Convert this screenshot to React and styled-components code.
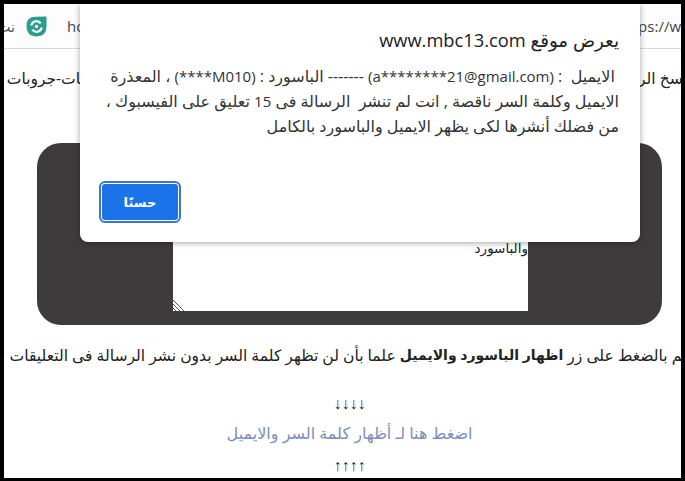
import React from "react";
import styled, { createGlobalStyle } from "styled-components";

const Global = createGlobalStyle`
  html, body {
    margin: 0;
    padding: 0;
    background: #000;
  }
  body {
    font-family: "Open Sans", "DejaVu Sans", sans-serif;
  }
`;

const App = () => {
  return (
    <Frame>
      <Global />
      <Screen>
        <Toolbar>
          <Tab>نت</Tab>
          <ShieldIcon viewBox="0 0 20 20">
            <path d="M0.5 9 Q0.5 1 9 0.8 L19.5 0.5 L19.5 10 Q19.5 19.5 10 19.5 Q0.5 19.5 0.5 9 Z" fill="#2a9d8f" />
            <path d="M5 9 A5 5 0 0 1 14 7" fill="none" stroke="#fff" strokeWidth="2" />
            <path d="M15 11 A5 5 0 0 1 6 13" fill="none" stroke="#fff" strokeWidth="2" />
            <circle cx="10" cy="10" r="1.6" fill="#fff" />
          </ShieldIcon>
          <Address>ho</Address>
          <UrlEnd>ps://w</UrlEnd>
        </Toolbar>

        <Content>
          <Headline>انسخ الرسالة التالية وانشرها فى 15 تعليق على الفيسبوك اليوم فى نفس الوقت على جميع الصفحات-جروبات</Headline>

          <DarkCard>
            <MessageBox>
              <BoxText>والباسورد</BoxText>
              <Grip viewBox="0 0 12 12">
                <path d="M0 1 L11 12 M0 5 L7 12 M0 9 L3 12" stroke="#555" strokeWidth="1" />
              </Grip>
            </MessageBox>
          </DarkCard>

          <Instruction>
            قم بالضغط على زر <b>اظهار الباسورد والايميل</b> علما بأن لن تظهر كلمة السر بدون نشر الرسالة فى التعليقات
          </Instruction>

          <Arrows $top={25}>↓↓↓↓</Arrows>
          <ShowLink>اضغط هنا لـ أظهار كلمة السر والايميل</ShowLink>
          <Arrows $top={11}>↑↑↑↑</Arrows>
        </Content>

        <Dialog>
          <DialogTitle>يعرض موقع www.mbc13.com</DialogTitle>
          <DialogBody>
            <p>&nbsp;الايميل&nbsp; : <Latin>(a********21@gmail.com)</Latin> ------- الباسورد : <Latin>(M010****)</Latin> ، المعذرة</p>
            <p>الايميل وكلمة السر ناقصة , انت لم تنشر&nbsp; الرسالة فى <Latin>15</Latin> تعليق على الفيسبوك ،</p>
            <p>من فضلك أنشرها لكى يظهر الايميل والباسورد بالكامل</p>
          </DialogBody>
          <DialogActions>
            <OkButton>حسنًا</OkButton>
          </DialogActions>
        </Dialog>
      </Screen>
    </Frame>
  );
};

export default App;

const Frame = styled.div`
  width: 685px;
  height: 481px;
  box-sizing: border-box;
  border: solid #000;
  border-width: 4px 4px 3px 4px;
  background: #000;
`;

const Screen = styled.div`
  position: relative;
  width: 100%;
  height: 100%;
  overflow: hidden;
  background: #fff;
  color: #222;
`;

const Toolbar = styled.div`
  width: 100%;
  height: 45px;
  box-sizing: border-box;
  border-bottom: 1px solid #d8d8d8;
  background: #fdfdfd;
  display: flex;
  align-items: center;
  font-size: 14px;
  color: #444;
`;

const Tab = styled.span`
  width: 11px;
  margin-right: 11px;
  flex: none;
  overflow: hidden;
  white-space: nowrap;
  direction: rtl;
  font-size: 14px;
  color: #555;
`;

const ShieldIcon = styled.svg`
  width: 21px;
  height: 21px;
  flex: none;
`;

const Address = styled.span`
  margin-left: 20px;
  font-size: 15px;
`;

const UrlEnd = styled.span`
  margin-left: auto;
  font-size: 15px;
  white-space: nowrap;
`;

const Content = styled.div`
  box-sizing: border-box;
  width: 100%;
  padding-left: 14px;
  display: flex;
  flex-direction: column;
  align-items: center;
`;

const Headline = styled.div`
  margin-top: 16px;
  height: 26px;
  width: 100%;
  flex: none;
  direction: rtl;
  white-space: nowrap;
  display: flex;
  justify-content: center;
  font-size: 15.5px;
  line-height: 26px;
`;

const DarkCard = styled.div`
  margin-top: 52px;
  width: 625px;
  height: 182px;
  flex: none;
  box-sizing: border-box;
  padding: 0 134px 14px 136px;
  border-radius: 24px;
  background: #3d3b3c;
  display: flex;
`;

const MessageBox = styled.div`
  position: relative;
  flex: 1;
  background: #fff;
  direction: rtl;
  padding-top: 96px;
  font-size: 13.5px;
  line-height: 18px;
  color: #222;
`;

const BoxText = styled.span`
  display: block;
`;

const Grip = styled.svg`
  position: absolute;
  left: 0;
  bottom: 0;
  width: 12px;
  height: 12px;
`;

const Instruction = styled.div`
  margin-top: 17px;
  width: 100%;
  height: 26px;
  flex: none;
  direction: rtl;
  white-space: nowrap;
  display: flex;
  justify-content: center;
  font-size: 15.6px;
  line-height: 26px;

  b {
    margin: 0 4px;
    font-size: 14px;
  }
`;

const Arrows = styled.div`
  margin-top: ${(p) => p.$top}px;
  flex: none;
  height: 22px;
  line-height: 22px;
  font-family: "Liberation Sans", sans-serif;
  font-size: 16px;
  color: #333;
`;

const ShowLink = styled.a`
  margin-top: 7px;
  flex: none;
  height: 22px;
  line-height: 22px;
  direction: rtl;
  font-size: 16px;
  color: #7b8fb8;
`;

const Dialog = styled.div`
  position: absolute;
  top: 0;
  left: 76px;
  width: 560px;
  height: 238px;
  box-sizing: border-box;
  padding: 24px 21px 20px 20px;
  border-radius: 0 0 8px 8px;
  background: #fff;
  box-shadow: 0 1px 6px rgba(0, 0, 0, 0.35);
  display: flex;
  flex-direction: column;
  direction: rtl;
`;

const DialogTitle = styled.div`
  font-size: 18.3px;
  line-height: 24px;
  color: #202124;
`;

const DialogBody = styled.div`
  margin-top: 12px;
  font-size: 16px;
  line-height: 25px;
  color: #333;

  p {
    margin: 0;
    white-space: nowrap;
  }
`;

const Latin = styled.span`
  font-size: 15px;
`;

const DialogActions = styled.div`
  margin-top: auto;
  display: flex;
  justify-content: flex-end;
`;

const OkButton = styled.button`
  width: 80px;
  height: 40px;
  box-sizing: border-box;
  border: 2px solid #fff;
  outline: 2px solid #3f76cc;
  outline-offset: -1px;
  border-radius: 5px;
  background: #1a73e8;
  color: #fff;
  font-family: inherit;
  font-size: 13px;
  font-weight: 700;
`;
